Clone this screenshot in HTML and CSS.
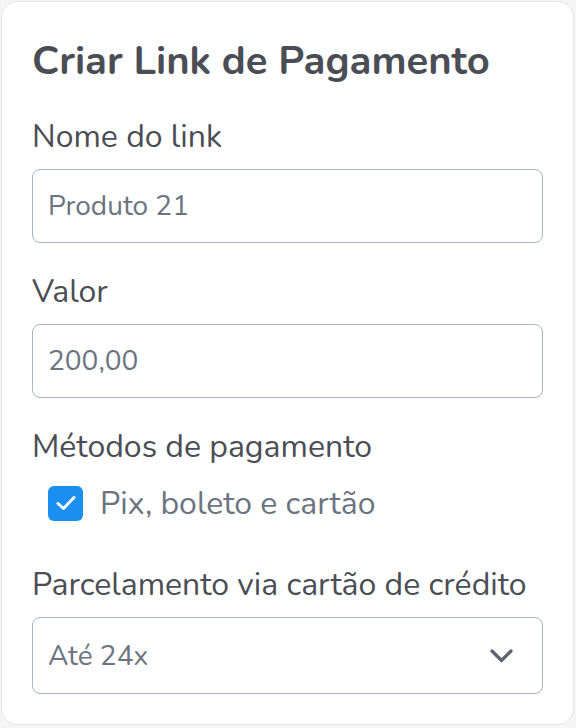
FILE: index.html
```html
<!DOCTYPE html>
<html lang="pt-BR">
<head>
<meta charset="utf-8">
<link rel="stylesheet" href="styles.css">
</head>
<body>
<div class="card">
  <h1 class="title">Criar Link de Pagamento</h1>
  <div class="field">
    <label class="label">Nome do link</label>
    <div class="input">Produto 21</div>
  </div>
  <div class="field">
    <label class="label">Valor</label>
    <div class="input">200,00</div>
  </div>
  <div class="field field-check">
    <label class="label">Métodos de pagamento</label>
    <div class="check-row">
      <span class="checkbox">
        <svg width="20" height="16" viewBox="0 0 20 16"><path d="M2 8.5 L7.5 13.5 L18 2.5" fill="none" stroke="#fff" stroke-width="3" stroke-linecap="round" stroke-linejoin="round"/></svg>
      </span>
      <span class="check-text">Pix, boleto e cartão</span>
    </div>
  </div>
  <div class="field">
    <label class="label">Parcelamento via cartão de crédito</label>
    <div class="input select">
      <span>Até 24x</span>
      <svg class="chev" width="23" height="14" viewBox="0 0 23 14"><path d="M2 2 L11.5 11.5 L21 2" fill="none" stroke="#5b636e" stroke-width="3.2" stroke-linecap="round" stroke-linejoin="round"/></svg>
    </div>
  </div>
</div>
</body>
</html>
```
FILE: styles.css
```css
html, body {
  margin: 0;
  padding: 0;
  background: #f5f5f5;
}
body {
  font-family: "Nunito", "Lato", "Open Sans", sans-serif;
  width: 576px;
  height: 728px;
}
.card {
  box-sizing: border-box;
  margin: 1px 2px 0 1px;
  width: 573px;
  height: 724px;
  background: #fff;
  border: 1px solid #e4e4e4;
  border-radius: 16px;
  padding: 35px 30px 0 30px;
  display: flex;
  flex-direction: column;
}
.title {
  margin: 0 0 32px 0;
  font-size: 40px;
  font-weight: 700;
  color: #4a4e54;
  line-height: 48px;
}
.field {
  display: flex;
  flex-direction: column;
  margin-bottom: 29px;
}
.field-check {
  margin-bottom: 42px;
}
.label {
  font-size: 32px;
  color: #4a4e54;
  line-height: 40px;
  margin-bottom: 12px;
}
.input {
  box-sizing: border-box;
  height: 74px;
  width: 511px;
  border: 1.5px solid #a9b5c3;
  border-radius: 8px;
  padding: 0 15px;
  display: flex;
  align-items: center;
  font-size: 28px;
  color: #6b7480;
}
.check-row {
  display: flex;
  align-items: center;
  height: 40px;
  padding-left: 16px;
  gap: 17px;
  margin-top: 4px;
}
.checkbox {
  width: 35px;
  height: 35px;
  border-radius: 6px;
  background: #1a8fef;
  display: flex;
  align-items: center;
  justify-content: center;
}
.check-text {
  font-size: 32px;
  color: #6b7480;
}
.select {
  justify-content: space-between;
  height: 77px;
}
.chev {
  margin-right: 14px;
}
```
